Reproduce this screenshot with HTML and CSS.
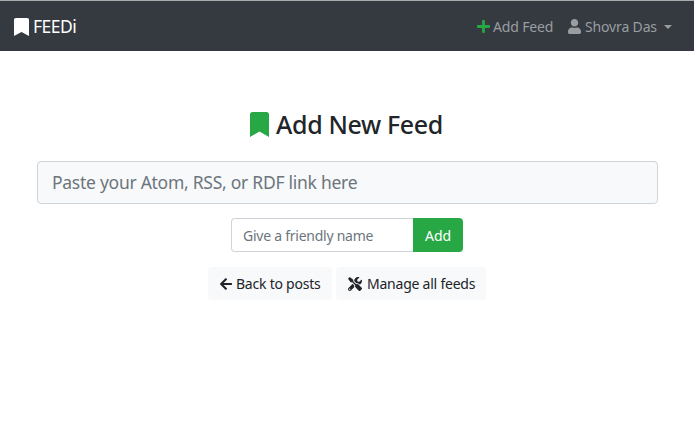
FILE: index.html
```html
<!DOCTYPE html>
<html lang="en">
<head>
<meta charset="utf-8">
<title>FEEDi</title>
<link rel="stylesheet" href="styles.css">
</head>
<body>
<nav class="navbar">
  <a class="brand"><svg class="icon-brand" viewBox="0 0 384 512" preserveAspectRatio="none"><path d="M0 512V48C0 21.49 21.49 0 48 0h288c26.51 0 48 21.49 48 48v464L192 400 0 512z"/></svg><span>FEEDi</span></a>
  <div class="links">
    <a class="link add-link"><svg class="icon-plus" viewBox="0 0 448 512"><path d="M416 208H272V64c0-17.67-14.33-32-32-32h-32c-17.67 0-32 14.33-32 32v144H32c-17.67 0-32 14.33-32 32v32c0 17.67 14.33 32 32 32h144v144c0 17.67 14.33 32 32 32h32c17.67 0 32-14.33 32-32V304h144c17.67 0 32-14.33 32-32v-32c0-17.67-14.33-32-32-32z"/></svg><span>Add Feed</span></a>
    <a class="link user-link"><svg class="icon-user" viewBox="0 0 448 512"><path d="M224 256c70.7 0 128-57.3 128-128S294.7 0 224 0 96 57.3 96 128s57.3 128 128 128zm89.6 32h-16.7c-22.2 10.2-46.9 16-72.9 16s-50.6-5.8-72.9-16h-16.7C60.2 288 0 348.2 0 422.4V464c0 26.5 21.5 48 48 48h352c26.5 0 48-21.5 48-48v-41.6c0-74.2-60.2-134.4-134.4-134.4z"/></svg><span>Shovra Das</span><i class="caret"></i></a>
  </div>
</nav>
<main>
  <h1 class="title"><svg class="icon-title" viewBox="0 0 384 512" preserveAspectRatio="none"><path d="M0 512V48C0 21.49 21.49 0 48 0h288c26.51 0 48 21.49 48 48v464L192 400 0 512z"/></svg><span>Add New Feed</span></h1>
  <input class="url" type="text" placeholder="Paste your Atom, RSS, or RDF link here">
  <div class="group">
    <input class="name" type="text" placeholder="Give a friendly name">
    <button class="submit">Add</button>
  </div>
  <div class="actions">
    <a class="btn back"><svg class="icon-arrow" viewBox="0 0 448 512"><path d="M257.5 445.1l-22.2 22.2c-9.4 9.4-24.6 9.4-33.9 0L7 273c-9.4-9.4-9.4-24.6 0-33.9L201.4 44.7c9.4-9.4 24.6-9.4 33.9 0l22.2 22.2c9.5 9.5 9.3 25-.4 34.3L136.6 216H424c13.3 0 24 10.7 24 24v32c0 13.3-10.7 24-24 24H136.6l120.5 114.8c9.8 9.3 10 24.8.4 34.3z"/></svg><span>Back to posts</span></a>
    <a class="btn manage"><svg class="icon-tools" viewBox="0 0 512 512"><path d="M501.1 395.7L384 278.6c-23.1-23.1-57.6-27.6-85.4-13.9L192 158.1V96L64 0 0 64l96 128h62.1l106.6 106.6c-13.6 27.8-9.2 62.3 13.9 85.4l117.1 117.1c14.6 14.6 38.2 14.6 52.7 0l52.7-52.7c14.5-14.6 14.5-38.2 0-52.7zM331.7 225c28.3 0 54.9 11 74.9 31l19.4 19.4c15.8-6.9 30.8-16.5 43.8-29.5 37.1-37.1 49.7-89.3 37.9-136.7-2.2-9-13.5-12.1-20.1-5.5l-74.4 74.4-67.9-11.3L334 98.9l74.4-74.4c6.6-6.6 3.4-17.9-5.7-20.2-47.4-11.7-99.6.9-136.6 37.9-28.5 28.5-41.9 66.1-41.2 103.6l82.1 82.1c8.1-1.9 16.5-2.9 24.7-2.9zm-103.9 82l-56.7-56.7L18.7 402.8c-25 25-25 65.5 0 90.5s65.5 25 90.5 0l123.6-123.6c-7.6-19.9-9.9-41.6-5-62.7zM64 472c-13.2 0-24-10.8-24-24 0-13.3 10.7-24 24-24s24 10.7 24 24c0 13.2-10.7 24-24 24z"/></svg><span>Manage all feeds</span></a>
  </div>
</main>
</body>
</html>
```
FILE: styles.css
```css
* { box-sizing: border-box; }
body { margin: 0; background: #fff; color: #212529; font: 14px/21px "Noto Sans", "Open Sans", sans-serif; }
svg { fill: currentColor; flex: none; display: block; }
span { white-space: nowrap; }
input, button { font-family: inherit; margin: 0; outline: 0; }
input::placeholder { color: #6c757d; opacity: 1; }

.navbar { height: 51px; border-top: 1px solid #a9abad; background: #343a40; display: flex; justify-content: space-between; align-items: center; padding: 1px 22px 0 14px; }
.brand { display: flex; align-items: center; color: #fff; font-size: 17.5px; letter-spacing: -0.5px; }
.icon-brand { width: 15px; height: 18px; margin-right: 4px; }
.links { display: flex; color: #9a9da0; }
.link { display: flex; align-items: center; letter-spacing: -0.15px; }
.add-link { width: 91px; }
.icon-plus { width: 13px; height: 15px; color: #28a745; margin-right: 3px; }
.icon-user { width: 13px; height: 15px; margin-right: 4px; }
.user-link { width: 104px; }
.caret { margin-left: auto; border: 4px solid transparent; border-top-color: currentColor; border-bottom: 0; }

main { display: flex; flex-direction: column; align-items: center; padding: 56px 36px 0 37px; }
.title { margin: 0 1px 0 0; height: 34px; width: 194px; display: flex; align-items: center; font-size: 25px; font-weight: 500; letter-spacing: -0.35px; }
.icon-title { width: 19px; height: 25px; margin-right: 7px; color: #28a745; }
.url { margin-top: 20px; width: 100%; height: 43px; padding: 0 14px 1px; border: 1px solid #ced4da; border-radius: 4px; background: #f8f9fa; font-size: 17.5px; letter-spacing: -0.27px; }
.group { display: flex; width: 232px; margin: 14px 1px 0 0; }
.name { width: 182px; height: 34px; padding: 1px 11px; border: 1px solid #ced4da; border-right: 0; border-radius: 4px 0 0 4px; font-size: 14px; letter-spacing: -0.25px; }
.submit { width: 50px; height: 34px; border: 0; padding: 1px 0 0; border-radius: 0 4px 4px 0; background: #28a745; color: #fff; font-size: 14px; letter-spacing: -0.1px; }
.actions { display: flex; gap: 4px; margin: 15px 1px 0 0; }
.btn { height: 33px; background: #f8f9fa; border-radius: 4px; display: flex; align-items: center; padding: 0 0 0 12px; letter-spacing: -0.23px; }
.back { width: 124px; }
.manage { width: 150px; }
.icon-arrow { width: 12px; height: 14px; margin-right: 4px; }
.icon-tools { width: 14px; height: 14px; margin-right: 5px; }
```
